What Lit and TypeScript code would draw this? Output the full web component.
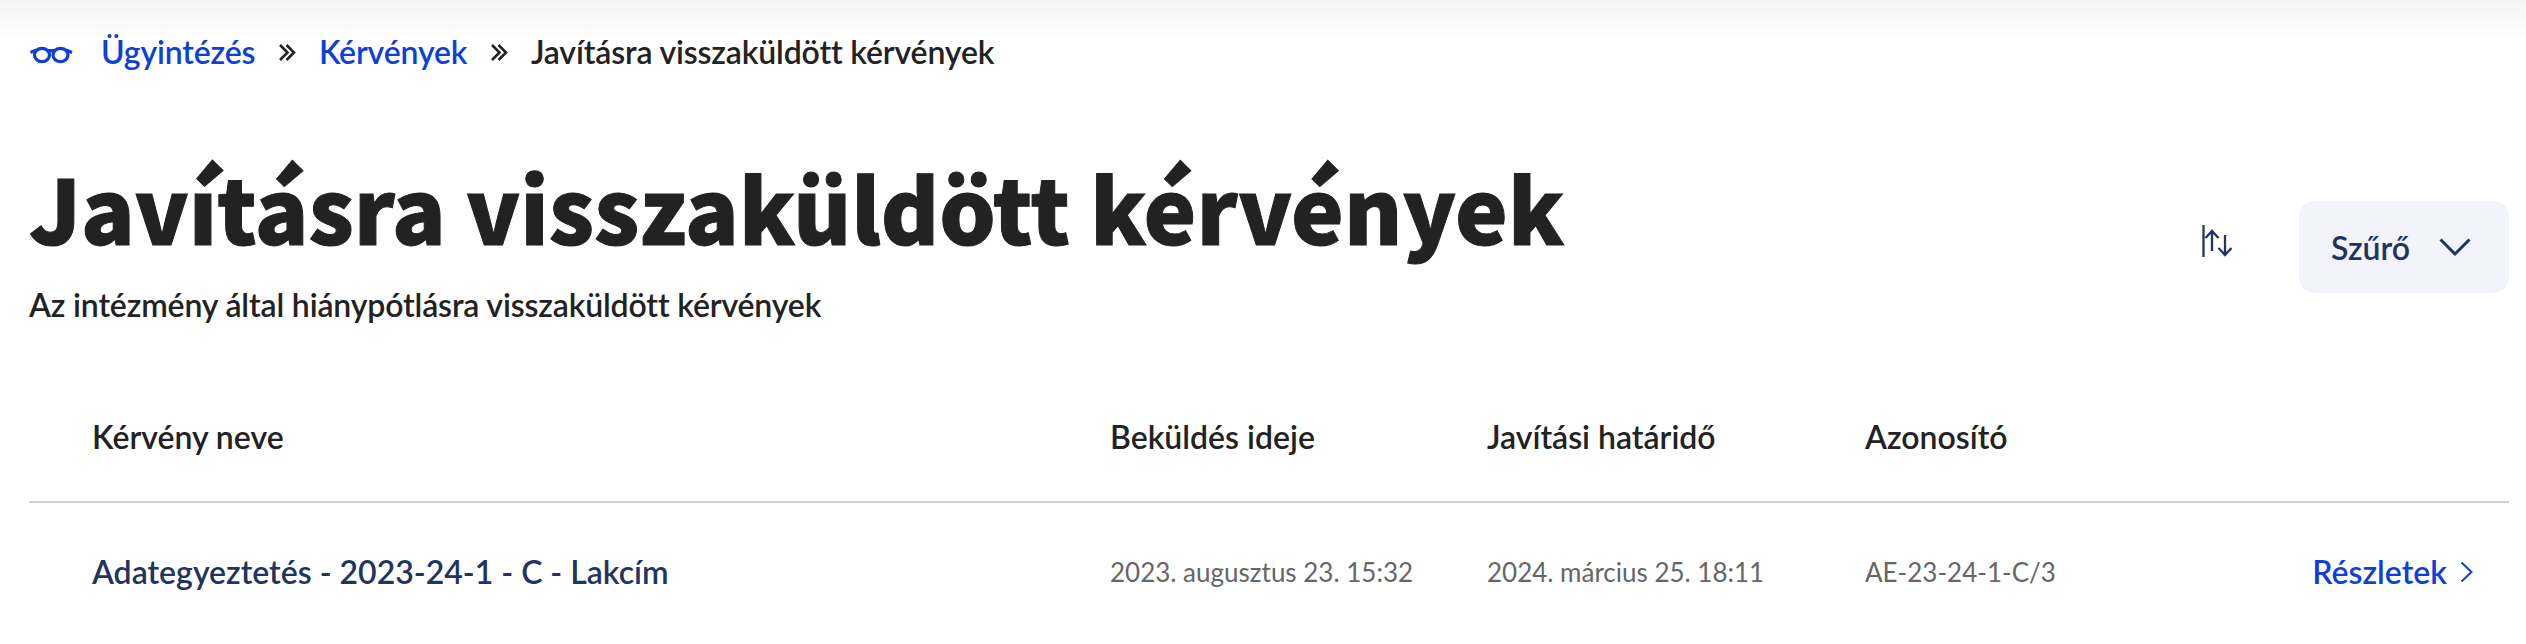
import { LitElement, html, css } from "lit";
import { customElement } from "lit/decorators.js";

@customElement("app-root")
export class AppRoot extends LitElement {
  static styles = css`
    :host { display: block; height: 644px; overflow: hidden; background: #fff; font-family: Lato, sans-serif; color: #222; }
    .wrap { padding: 0 17px 0 29px; background: linear-gradient(#f4f4f4, #fff 40px); height: 644px; box-sizing: border-box; }
    .crumbs { display: flex; align-items: center; height: 32px; padding-top: 36px; font-size: 32px; font-weight: 600; line-height: 32px; letter-spacing: -0.15px; }
    .crumbs a { color: #0f3fd9; text-decoration: none; }
    .crumbs svg.glasses { width: 44px; height: 20px; margin-right: 28px; color: #0f3fd9; overflow: visible; }
    .sep { width: 20px; height: 20px; margin: 0 21.5px 0 22px; color: #222; overflow: visible; }
    .head { display: flex; align-items: flex-start; justify-content: space-between; margin-top: 84px; }
    h1 { margin: 0; font-family: "Noto Sans CJK SC", sans-serif; font-size: 88.8px; line-height: 110px; font-weight: 900; color: #222; -webkit-text-stroke: 1px #222; }
    .sub { font-size: 32px; font-weight: 600; line-height: 36px; margin-top: 25px; letter-spacing: -0.15px; }
    .tools { display: flex; align-items: center; margin-top: 49px; }
    .sort { width: 32px; height: 34px; color: #1f3560; margin: 0 65px 12px 0; }
    .filter { display: flex; align-items: center; width: 210px; height: 92px; box-sizing: border-box; padding: 0 38px 0 32px; justify-content: space-between; background: #f2f3fb; border-radius: 16px; color: #1f3560; font-size: 32px; font-weight: 600; }
    .filter svg { width: 32px; height: 20px; }
    .row { display: grid; grid-template-columns: 1018px 377px 378px 1fr; align-items: center; padding-left: 63px; }
    .th { height: 126px; padding-bottom: 6px; margin-top: 54px; border-bottom: 2px solid #d0d0d0; font-size: 32px; font-weight: 600; box-sizing: border-box; }
    .td { height: 137px; font-size: 26px; color: #666; }
    .name { font-size: 32px; color: #1f3560; font-weight: 600; }
    .last { display: flex; align-items: center; justify-content: space-between; }
    .det { display: flex; align-items: center; gap: 12px; color: #0f3fd9; font-size: 32px; font-weight: 600; margin-right: 36px; }
    .det svg { width: 14px; height: 24px; }
  `;
  render() {
    return html`<div class="wrap">
      <nav class="crumbs">
        <svg class="glasses" viewBox="0 0 44 20" fill="none" stroke="currentColor" stroke-width="3.200">
          <ellipse cx="13" cy="13" rx="7.500" ry="6.700"/><ellipse cx="31.500" cy="13" rx="7.500" ry="6.700"/><path d="M19 8.700h6M7.500 8 1.500 10.500M37 8l6 2.500"/>
        </svg>
        <a href="#">Ügyintézés</a>
        <svg class="sep" viewBox="0 0 20 20" fill="none" stroke="currentColor" stroke-width="2.600"><path d="M3 3l7.500 7.500L3 18M9.500 3l7.500 7.500L9.500 18"/></svg>
        <a href="#">Kérvények</a>
        <svg class="sep" viewBox="0 0 20 20" fill="none" stroke="currentColor" stroke-width="2.600"><path d="M3 3l7.500 7.500L3 18M9.500 3l7.500 7.500L9.500 18"/></svg>
        <span>Javításra visszaküldött kérvények</span>
      </nav>
      <div class="head">
        <div>
          <h1>Javításra visszaküldött kérvények</h1>
          <div class="sub">Az intézmény által hiánypótlásra visszaküldött kérvények</div>
        </div>
        <div class="tools">
          <svg class="sort" viewBox="0 0 32 34" fill="none" stroke="currentColor" stroke-width="2.300">
            <path d="M1.500 1v32"/><path d="M10 27V7M3.500 14 10 7l6.500 7M23 11v20M16.500 24l6.500 7 6.500-7"/>
          </svg>
          <div class="filter"><span>Szűrő</span>
            <svg viewBox="0 0 32 20" fill="none" stroke="currentColor" stroke-width="3"><path d="M1.500 2.500 16 17 30.500 2.500"/></svg>
          </div>
        </div>
      </div>
      <div class="row th"><div>Kérvény neve</div><div>Beküldés ideje</div><div>Javítási határidő</div><div>Azonosító</div></div>
      <div class="row td">
        <div class="name">Adategyeztetés - 2023-24-1 - C - Lakcím</div>
        <div>2023. augusztus 23. 15:32</div>
        <div>2024. március 25. 18:11</div>
        <div class="last"><span>AE-23-24-1-C/3</span>
          <span class="det">Részletek
            <svg viewBox="0 0 14 24" fill="none" stroke="currentColor" stroke-width="2"><path d="M2.500 2.500l10 9.500-10 9.500"/></svg>
          </span>
        </div>
      </div>
    </div>`;
  }
}
